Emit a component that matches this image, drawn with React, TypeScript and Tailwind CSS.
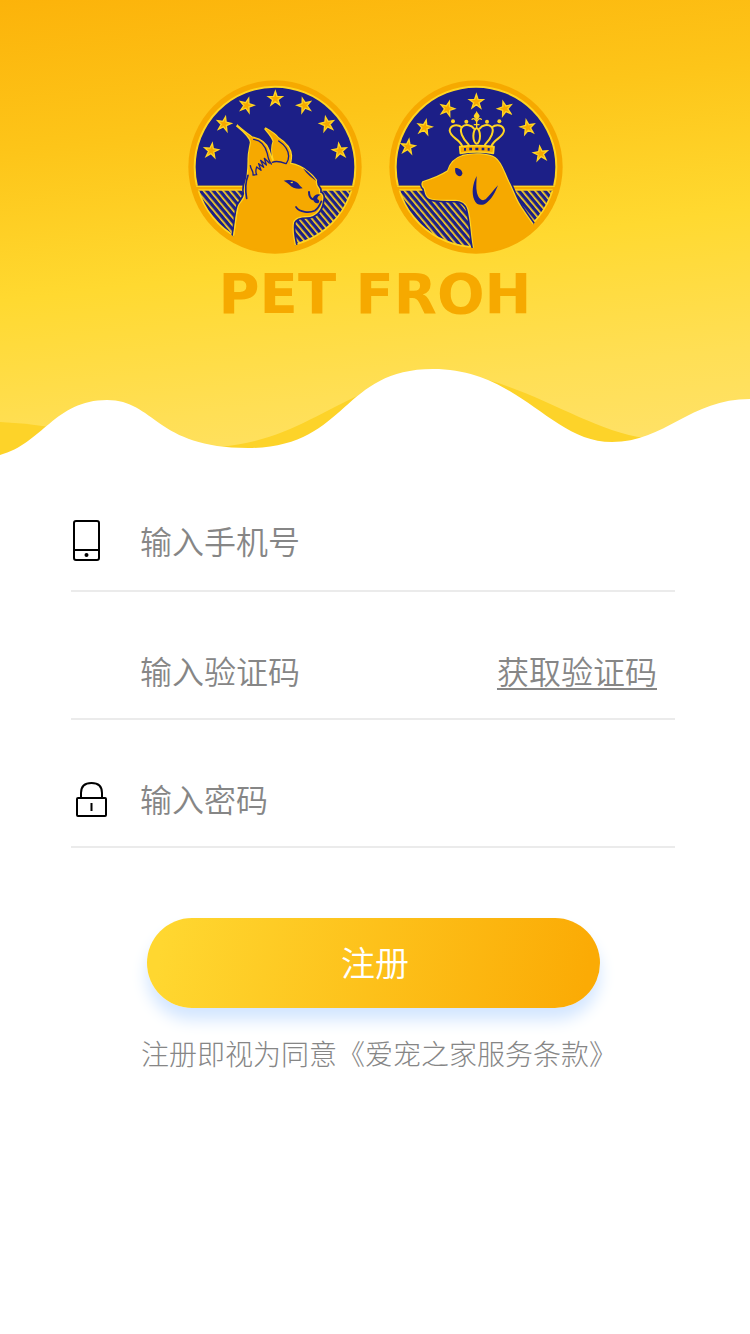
import type { ReactNode } from "react";

const ORANGE = "#f6a900";
const GOLD = "#ffd522";
const NAVY = "#1c1f87";

type StarSpot = { x: number; y: number; turn: number };

const lynxStars: StarSpot[] = [
  { x: 95, y: 241, turn: 8 },
  { x: 133, y: 161, turn: 12 },
  { x: 201, y: 105, turn: 16 },
  { x: 287, y: 85, turn: 0 },
  { x: 374, y: 105, turn: -16 },
  { x: 442, y: 161, turn: -12 },
  { x: 480, y: 241, turn: -8 },
];

const dogStars: StarSpot[] = [
  { x: 82, y: 229, turn: 8 },
  { x: 132, y: 171, turn: 12 },
  { x: 200, y: 115, turn: 16 },
  { x: 287, y: 94, turn: 0 },
  { x: 373, y: 115, turn: -16 },
  { x: 441, y: 171, turn: -12 },
  { x: 480, y: 250, turn: -8 },
];

function Star({ x, y, turn }: StarSpot) {
  return (
    <path
      d="M0 -22 L5 -7 L21 -6 L8 3 L13 19 L0 9 L-13 19 L-8 3 L-21 -6 L-5 -7Z"
      transform={`translate(${x} ${y}) rotate(${turn})`}
      fill={ORANGE}
      stroke={GOLD}
      strokeWidth={4}
    />
  );
}

type BadgeProps = {
  id: string;
  label: string;
  stars: StarSpot[];
  body: string;
  children: ReactNode;
};

function Badge({ id, label, stars, body, children }: BadgeProps) {
  return (
    <svg viewBox="25 29 522 522" className="size-[174px]" role="img" aria-label={label}>
      <defs>
        <clipPath id={`${id}-sky`}>
          <rect x="25" y="29" width="522" height="317" />
        </clipPath>
        <clipPath id={`${id}-ground`}>
          <rect x="25" y="361" width="522" height="190" />
        </clipPath>
        <clipPath id={`${id}-inner`}>
          <circle cx="286" cy="290" r="243" />
        </clipPath>
        <clipPath id={`${id}-outer`}>
          <circle cx="286" cy="290" r="252" />
        </clipPath>
        <pattern
          id={`${id}-hatch`}
          width="15"
          height="15"
          patternUnits="userSpaceOnUse"
          patternTransform="rotate(-40)"
        >
          <rect width="15" height="15" fill={NAVY} />
          <rect width="5" height="15" fill={GOLD} />
        </pattern>
      </defs>

      <circle cx="286" cy="290" r="260" fill={ORANGE} />

      {/* Night sky */}
      <g clipPath={`url(#${id}-sky)`}>
        <circle cx="286" cy="290" r="241" fill={NAVY} stroke={GOLD} strokeWidth="6" />
      </g>
      <path d="M50 348H522M56 359H516" stroke={GOLD} strokeWidth="4" />

      {/* Hatched ground */}
      <g clipPath={`url(#${id}-ground)`}>
        <circle
          cx="286"
          cy="290"
          r="240"
          fill={`url(#${id}-hatch)`}
          stroke={GOLD}
          strokeWidth="5"
        />
      </g>

      {stars.map((star) => (
        <Star key={star.x} {...star} />
      ))}

      <g clipPath={`url(#${id}-inner)`}>
        <path d={body} fill="none" stroke={NAVY} strokeWidth="17" strokeLinejoin="round" />
        <path d={body} fill="none" stroke={GOLD} strokeWidth="7" strokeLinejoin="bevel" />
      </g>
      <path d={body} fill={ORANGE} clipPath={`url(#${id}-outer)`} />
      {children}
    </svg>
  );
}

function LynxBadge() {
  return (
    <Badge
      id="lynx"
      label="Lynx"
      stars={lynxStars}
      body="M171 165 C186 179 202 190 216 201 C238 205 257 216 265 236 C271 250 273 262 278 272 L283 270 C276 248 275 232 282 213 C279 200 268 188 256 174 C272 183 288 193 296 204 C315 216 333 234 334 256 C334 266 332 274 331 280 C352 284 370 292 384 305 C393 312 402 320 409 330 C406 345 414 350 418 358 L418 370 C427 370 430 380 426 392 C424 415 408 437 382 437 C360 437 345 443 340 455 C336 480 340 500 346 526 L340 570 L140 570 L163 497 C169 465 170 430 177 409 C182 395 196 388 197 370 C192 350 200 340 204 318 C206 300 207 290 207 270 C206 250 211 235 214 216 C212 198 190 181 171 165Z"
    >
      <g fill="none" stroke={NAVY} strokeLinecap="round" strokeLinejoin="round">
        {/* Ears */}
        <path d="M222 207 C241 210 257 225 263 250 C265 262 269 274 275 281" strokeWidth="4" />
        <path d="M297 212 C314 223 326 239 327 257 C327 267 324 274 320 279" strokeWidth="4" />
        <path d="M278 276 C291 270 306 275 319 280" strokeWidth="4" />
        <path d="M212 286 C214 300 222 302 220 314 L231 313 C226 304 229 298 231 290 L244 300 L237 280 L252 291 L243 270 L260 284 L254 264 L269 278" strokeWidth="4" />
        <path d="M205 315 C197 335 196 356 201 384" strokeWidth="5" />
        {/* Muzzle */}
        <path d="M349 410 C360 427 390 428 405 421 C415 415 421 403 425 393" strokeWidth="5" />
        <path d="M388 365 C388 377 391 384 400 387" strokeWidth="6" />
      </g>
      <path d="M370 294 C386 305 399 318 410 332 C398 325 382 312 370 294Z" fill={NAVY} />
      <path d="M400 382 C405 373 413 369 423 373 C417 375 413 379 413 386 C418 389 422 394 415 399 C407 399 400 394 400 382Z" fill={NAVY} />
      <path d="M312 331 C330 326 347 331 355 339 C359 345 364 350 369 354 C352 357 337 353 330 344 C324 338 320 335 312 331Z" fill={NAVY} />
      <path d="M332 335 L340 334 C339 340 335 341 332 335Z" fill={GOLD} />
      <path d="M162 496 C167 467 169 438 175 414" fill="none" stroke={GOLD} strokeWidth="3" />
    </Badge>
  );
}

function DogBadge() {
  return (
    <Badge
      id="dog"
      label="Dog"
      stars={dogStars}
      body="M128 335 C160 326 183 315 202 303 C208 280 223 264 246 257 C278 249 322 250 342 263 C364 278 369 310 386 341 C399 367 404 390 425 418 C436 435 447 450 458 465 L480 560 L285 580 L281 535 C273 500 273 450 263 415 C257 397 243 389 225 388 C194 388 164 390 147 383 C134 376 135 360 132 353 C126 348 124 341 128 335Z"
    >
      <path d="M288 317 C276 341 272 367 281 389 C287 405 304 408 318 397 C334 385 344 366 352 345 C337 361 328 375 315 387 C302 395 293 382 289 368 C285 350 288 333 288 317Z" fill={NAVY} />
      <path d="M224 293 C234 292 245 299 245 309 C244 318 237 320 230 315 C224 310 222 302 224 293Z" fill={NAVY} />

      {/* Crown */}
      <g fill="none" stroke={GOLD} strokeWidth="6" strokeLinecap="round" strokeLinejoin="round">
        <path d="M237 229 C270 225 306 225 340 229 L338 249 C306 244 270 244 239 249Z" fill={ORANGE} strokeWidth="5" />
        <path d="M244 226 C236 206 207 200 207 180 C209 164 230 160 243 171" />
        <path d="M333 226 C341 206 370 200 370 180 C368 164 347 160 334 171" />
        <path d="M264 223 C246 205 234 180 245 169 C256 160 273 165 280 175" />
        <path d="M313 223 C331 205 343 180 332 169 C321 160 304 165 297 175" />
        <ellipse cx="288" cy="197" rx="10" ry="23" />
        <path d="M288 152V172M274 147 C278 142 284 146 288 154 C292 146 298 142 302 147M281 163H295" strokeWidth="4" />
      </g>
      <path d="M288 122 C291 130 297 133 297 138 C295 143 290 146 288 151 C286 146 281 143 279 138 C279 133 285 130 288 122Z" fill={GOLD} />
      <g fill={GOLD}>
        <circle cx="217" cy="153" r="6" />
        <circle cx="257" cy="154" r="6" />
        <circle cx="319" cy="154" r="6" />
        <circle cx="356" cy="153" r="6" />
      </g>
      <path d="M250 237h6M266 236h8M284 236h9M303 236h8M321 237h6" stroke={NAVY} strokeWidth="8" />
    </Badge>
  );
}

function Wave() {
  return (
    <svg
      viewBox="0 366 750 90"
      preserveAspectRatio="none"
      className="block h-[90px] w-full"
      aria-hidden="true"
    >
      <g fill="#fdd329">
        <path d="M0 422 Q25 423 50 427 V456 H0Z" />
        <path d="M218 447 C285 441 315 414 362 394 L350 448 H222Z" />
        <path d="M488 380 C545 396 597 432 645 438 L612 444 L540 430Z" />
      </g>
      <path
        d="M0 455 C42 444 55 400 107 400 C155 400 155 448 248 448 C348 448 340 369 433 369 C520 369 550 442 612 442 C665 442 690 399 750 399 V457 H0Z"
        fill="#fff"
      />
    </svg>
  );
}

function PhoneIcon() {
  return (
    <svg viewBox="0 0 32 44" className="ml-px h-11 w-8" fill="none" stroke="#000" strokeWidth="2" aria-hidden="true">
      <rect x="2" y="1" width="25" height="39" rx="2" />
      <path d="M2 30H27" />
      <circle cx="14.5" cy="35" r="2" fill="#000" stroke="none" />
    </svg>
  );
}

function LockIcon() {
  return (
    <svg viewBox="0 0 34 40" className="ml-1 h-10 w-[34px]" fill="none" stroke="#000" strokeWidth="2" aria-hidden="true">
      <rect x="2" y="18" width="29" height="18" rx="1" />
      <path d="M6 18V13C6 6 10 3 16.500 3S27 6 27 13V18M16.500 23V31" />
    </svg>
  );
}

type FieldProps = {
  id: string;
  type: string;
  placeholder: string;
  className?: string;
  icon?: ReactNode;
  action?: ReactNode;
};

function Field({ id, type, placeholder, className = "pb-[22px]", icon, action }: FieldProps) {
  return (
    <div className={`flex items-center border-b-2 border-[#ebebeb] ${className}`}>
      <label htmlFor={id} aria-label={placeholder} className="flex w-[69px] shrink-0">
        {icon}
      </label>
      <input
        id={id}
        type={type}
        placeholder={placeholder}
        className="h-12 min-w-0 flex-1 bg-transparent pb-1 text-[32px] font-[350] text-[#333] outline-none placeholder:text-[#868686]"
      />
      {action}
    </div>
  );
}

export default function App() {
  return (
    <main className="min-h-screen bg-white font-['Noto_Sans_CJK_SC',sans-serif]">
      <header className="bg-[linear-gradient(173deg,#fcb30a_0%,#fdc519_28%,#ffd930_55%,#ffdf55_80%,#ffe26c_100%)] pt-20">
        <div className="flex justify-center gap-[27px]">
          <LynxBadge />
          <DogBadge />
        </div>
        <h1 className="mt-1 mb-9 text-center font-['DejaVu_Sans',sans-serif] text-[56px] leading-[72px] font-bold whitespace-nowrap text-[#f6a900]">
          PET FROH
        </h1>
        <Wave />
      </header>

      <form className="pt-[38px] pr-[75px] pl-[71px]" onSubmit={(e) => e.preventDefault()}>
        <div className="flex flex-col gap-14 pt-6">
          <Field id="phone" type="tel" placeholder="输入手机号" className="pb-6" icon={<PhoneIcon />} />
          <Field
            id="code"
            type="text"
            placeholder="输入验证码"
            action={
              <button
                type="button"
                className="mr-[18px] h-12 shrink-0 pb-1 text-[32px] leading-[44px] font-[350] text-[#868686] underline decoration-2 underline-offset-4"
              >
                获取验证码
              </button>
            }
          />
          <Field id="password" type="password" placeholder="输入密码" icon={<LockIcon />} />
        </div>

        <button
          type="submit"
          className="mx-auto mt-[70px] block h-[90px] w-3/4 rounded-full bg-[linear-gradient(100deg,#ffd730_4%,#fbab05_96%)] pb-1 pl-1 text-[34px] font-[350] text-white shadow-[0_12px_16px_#d3e6ff]"
        >
          注册
        </button>

        <p className="mt-6 pl-3 text-center text-[28px] font-light whitespace-nowrap text-[#868686]">
          注册即视为同意
          <a href="#terms">《爱宠之家服务条款》</a>
        </p>
      </form>
    </main>
  );
}
